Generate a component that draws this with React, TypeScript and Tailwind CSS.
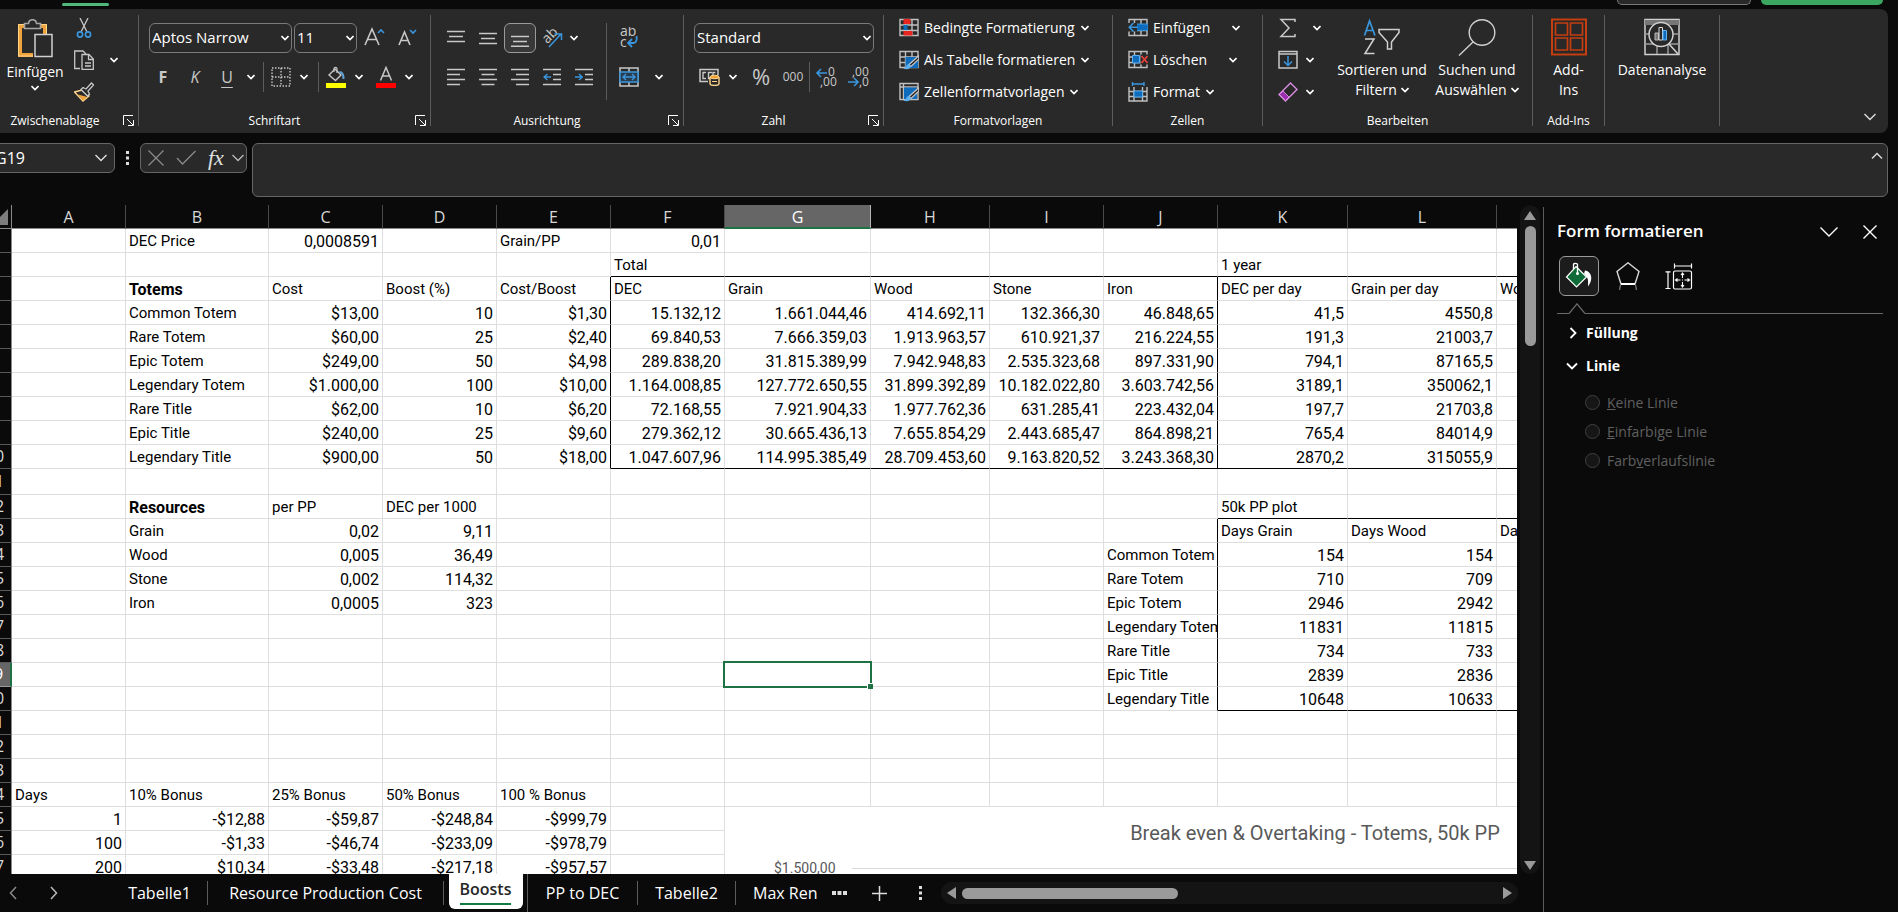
import { ReactNode } from 'react'

// ---------- sheet data ----------

const COLUMNS = [
  { id: 'A', width: 'w-[114px]' },
  { id: 'B', width: 'w-[143px]' },
  { id: 'C', width: 'w-[114px]' },
  { id: 'D', width: 'w-[114px]' },
  { id: 'E', width: 'w-[114px]' },
  { id: 'F', width: 'w-[114px]' },
  { id: 'G', width: 'w-[146px]' },
  { id: 'H', width: 'w-[119px]' },
  { id: 'I', width: 'w-[114px]' },
  { id: 'J', width: 'w-[114px]' },
  { id: 'K', width: 'w-[130px]' },
  { id: 'L', width: 'w-[149px]' },
  { id: 'M', width: 'w-[136px]' },
  { id: 'N', width: 'w-[136px]' },
  { id: 'O', width: 'w-[136px]' },
]

const ROWS: Record<number, string[]> = {
  1: ['', 'DEC Price', '0,0008591', '', 'Grain/PP', '0,01'],
  2: ['', '', '', '', '', 'Total', '', '', '', '', '1 year'],
  3: ['', 'Totems', 'Cost', 'Boost (%)', 'Cost/Boost', 'DEC', 'Grain', 'Wood', 'Stone', 'Iron', 'DEC per day', 'Grain per day', 'Wood per day'],
  4: ['', 'Common Totem', '$13,00', '10', '$1,30', '15.132,12', '1.661.044,46', '414.692,11', '132.366,30', '46.848,65', '41,5', '4550,8'],
  5: ['', 'Rare Totem', '$60,00', '25', '$2,40', '69.840,53', '7.666.359,03', '1.913.963,57', '610.921,37', '216.224,55', '191,3', '21003,7'],
  6: ['', 'Epic Totem', '$249,00', '50', '$4,98', '289.838,20', '31.815.389,99', '7.942.948,83', '2.535.323,68', '897.331,90', '794,1', '87165,5'],
  7: ['', 'Legendary Totem', '$1.000,00', '100', '$10,00', '1.164.008,85', '127.772.650,55', '31.899.392,89', '10.182.022,80', '3.603.742,56', '3189,1', '350062,1'],
  8: ['', 'Rare Title', '$62,00', '10', '$6,20', '72.168,55', '7.921.904,33', '1.977.762,36', '631.285,41', '223.432,04', '197,7', '21703,8'],
  9: ['', 'Epic Title', '$240,00', '25', '$9,60', '279.362,12', '30.665.436,13', '7.655.854,29', '2.443.685,47', '864.898,21', '765,4', '84014,9'],
  10: ['', 'Legendary Title', '$900,00', '50', '$18,00', '1.047.607,96', '114.995.385,49', '28.709.453,60', '9.163.820,52', '3.243.368,30', '2870,2', '315055,9'],
  12: ['', 'Resources', 'per PP', 'DEC per 1000', '', '', '', '', '', '', '50k PP plot'],
  13: ['', 'Grain', '0,02', '9,11', '', '', '', '', '', '', 'Days Grain', 'Days Wood', 'Days Stone'],
  14: ['', 'Wood', '0,005', '36,49', '', '', '', '', '', 'Common Totem', '154', '154'],
  15: ['', 'Stone', '0,002', '114,32', '', '', '', '', '', 'Rare Totem', '710', '709'],
  16: ['', 'Iron', '0,0005', '323', '', '', '', '', '', 'Epic Totem', '2946', '2942'],
  17: ['', '', '', '', '', '', '', '', '', 'Legendary Totem', '11831', '11815'],
  18: ['', '', '', '', '', '', '', '', '', 'Rare Title', '734', '733'],
  19: ['', '', '', '', '', '', '', '', '', 'Epic Title', '2839', '2836'],
  20: ['', '', '', '', '', '', '', '', '', 'Legendary Title', '10648', '10633'],
  24: ['Days', '10% Bonus', '25% Bonus', '50% Bonus', '100 % Bonus'],
  25: ['1', '-$12,88', '-$59,87', '-$248,84', '-$999,79'],
  26: ['100', '-$1,33', '-$46,74', '-$233,09', '-$978,79'],
  27: ['200', '$10,34', '-$33,48', '-$217,18', '-$957,57'],
}

const BOLD = ['Totems', 'Resources']
const SELECTED = { col: 'G', row: 19 }
const isNumber = (v: string) => /^-?\$?[\d.,]+$/.test(v)

function textStyle(value: string) {
  if (isNumber(value)) return 'pr-[3px] text-right text-base'
  if (BOLD.includes(value)) return 'pl-[3px] text-base font-bold'
  return 'pl-[3px] text-[15px]'
}

// black frame lines around the two result blocks
function rightBorder(c: number, r: number) {
  if (c === 4 && r >= 3 && r <= 10) return 'border-r-black'
  if (c === 9 && ((r >= 3 && r <= 10) || (r >= 13 && r <= 20))) return 'border-r-black'
  return 'border-r-[#dedede]'
}

function bottomBorder(c: number, r: number) {
  if ((r === 2 || r === 10) && c >= 5) return 'border-b-black'
  if ((r === 12 || r === 20) && c >= 10) return 'border-b-black'
  return 'border-b-[#dedede]'
}

// ---------- small icons ----------

function Svg({ w = 20, h = 20, children }: { w?: number; h?: number; children: ReactNode }) {
  return (
    <svg width={w} height={h} viewBox={`0 0 ${w} ${h}`} fill="none" className="shrink-0" aria-hidden="true">
      {children}
    </svg>
  )
}

const Chevron = () => (
  <Svg w={8} h={6}>
    <path d="M.5 1 4 4.500 7.500 1" stroke="#fff" strokeWidth="1.600" />
  </Svg>
)

const BigChevron = ({ up = false }: { up?: boolean }) => (
  <Svg w={14} h={8}>
    <path d={up ? 'M2 6.5 7 1.5 12 6.5' : 'M1.5 1 7 6.5 12.5 1'} stroke="#ddd" strokeWidth="1.4" />
  </Svg>
)

const Launcher = () => (
  <Svg w={11} h={11}>
    <path d="M.5 10V.5H10M4 4l6 6M10.5 5v5.5H5" stroke="#fff" />
  </Svg>
)

const PasteIcon = () => (
  <Svg w={36} h={40}>
    <path d="M8 7H3v29h13M23 7h5v8" stroke="#f0a23c" strokeWidth="4" />
    <path d="M8 5.500H1.500v31.500H16M23 5.500h6.500V15" stroke="#ffd68a" />
    <path d="M7.500 9.500V4.500h4c.5-5 7.500-5 8 0h4v5z" fill="#292929" stroke="#a5a5a5" strokeWidth="1.6" />
    <rect x="18" y="15.500" width="17" height="22" fill="#292929" stroke="#d0d0d0" strokeWidth="1.5" />
  </Svg>
)

const CutIcon = () => (
  <Svg>
    <path d="M6 0l7 14M14 0 7 14" stroke="#c8c8c8" strokeWidth="1.3" />
    <circle cx="6" cy="16.500" r="2.600" stroke="#3a96dd" strokeWidth="1.600" />
    <circle cx="14" cy="16.500" r="2.600" stroke="#3a96dd" strokeWidth="1.600" />
  </Svg>
)

const CopyIcon = () => (
  <Svg>
    <path d="M6 18.500H.700V1H9l3 3" stroke="#c8c8c8" strokeWidth="1.300" />
    <path d="M8 4.500h7l4.300 4.500v10.300H8z" fill="#292929" stroke="#c8c8c8" strokeWidth="1.300" />
    <path d="M14.500 5v4.500H19M11 13h6M11 16h6" stroke="#c8c8c8" strokeWidth="1.300" />
  </Svg>
)

const BrushIcon = () => (
  <Svg>
    <path d="M.5 10 8 8l7 6-6 5z" fill="#292929" stroke="#ffd68a" strokeWidth="1.300" />
    <path d="M4 12.500 13.500 15 9 18.500z" fill="#f0a23c" />
    <path d="M7 7.500 9 5.500 12 7l5.500-6 2 2-5.500 6 1.500 3-2 2z" fill="#292929" stroke="#c8c8c8" strokeWidth="1.300" />
  </Svg>
)

const GrowFont = ({ shrink = false }: { shrink?: boolean }) => (
  <Svg w={22} h={22}>
    <path d={shrink ? 'M3 18 8.500 5 14 18M5 13.500h7' : 'M1 18 8 2 15 18M3.500 12.500h9'} stroke="#c8c8c8" strokeWidth="1.600" />
    <path d={shrink ? 'M14 3 17 6 20 3' : 'M14 6 17 3 20 6'} stroke="#3a96dd" strokeWidth="1.600" />
  </Svg>
)

const BorderIcon = () => (
  <Svg>
    <path d="M1 1h18v18H1zM10 1v18M1 10h18" stroke="#c8c8c8" strokeWidth="1.400" strokeDasharray="1.500 1.500" />
  </Svg>
)

const FillIcon = () => (
  <Svg w={20} h={22}>
    <path d="M3 9 9 3l6 6-5.500 5.500z" stroke="#c8c8c8" strokeWidth="1.400" />
    <path d="M8 6V2.500C8 1 11 1 11 2.500V7" stroke="#c8c8c8" strokeWidth="1.200" />
    <path d="M13.500 6c3 0 4 3 4 7" stroke="#5fa3d8" strokeWidth="2" />
    <path d="M0 17h20v5H0z" fill="#ff0" />
  </Svg>
)

const FontColorIcon = () => (
  <Svg w={20} h={22}>
    <path d="M4.500 14.500 10 1.500l5.500 13M6.500 10h7" stroke="#c8c8c8" strokeWidth="1.500" />
    <path d="M0 17h20v5H0z" fill="#f00" />
  </Svg>
)

const Lines = ({ d }: { d: string }) => (
  <Svg w={18} h={18}>
    <path d={d} stroke="#c8c8c8" strokeWidth="1.600" />
  </Svg>
)

const OrientationIcon = () => (
  <Svg w={22} h={22}>
    <text x="2" y="15" transform="rotate(-45 7 11)" fontSize="14" fill="#c8c8c8" className="font-['Open_Sans',sans-serif]">ab</text>
    <path d="M8 20 20 7M13.500 7H20.500v6" stroke="#3a96dd" strokeWidth="1.500" />
  </Svg>
)

const IndentIcon = ({ right = false }: { right?: boolean }) => (
  <Svg w={18} h={18}>
    <path d="M0 1.500h18M10 6.500h8M10 11.500h8M0 16.500h18" stroke="#c8c8c8" strokeWidth="1.600" />
    <path d={right ? 'M0 9h7M4 6l3.200 3L4 12' : 'M8 9H1.500M4.500 6 1 9l3.500 3'} stroke="#3a96dd" strokeWidth="1.400" />
  </Svg>
)

const WrapIcon = () => (
  <Svg w={20} h={22}>
    <text x="1" y="9" fontSize="14" fill="#c8c8c8" className="font-['Open_Sans',sans-serif]">ab</text>
    <text x="1" y="20" fontSize="14" fill="#c8c8c8" className="font-['Open_Sans',sans-serif]">c</text>
    <path d="M17.500 9c1 5-1 7-3 7H9.500M13 12l-4 4 4 4" stroke="#3a96dd" strokeWidth="1.800" />
  </Svg>
)

const MergeIcon = () => (
  <Svg>
    <path d="M1 1h18v18H1zM10 1v4M10 15v4" stroke="#c8c8c8" strokeWidth="1.500" />
    <path d="M1 5h18v10H1z" fill="#2b3d4d" stroke="#3a96dd" strokeWidth="1.500" />
    <path d="M4 10h12M7 7l-3 3 3 3M13 7l3 3-3 3" stroke="#3a96dd" strokeWidth="1.400" />
  </Svg>
)

const CurrencyIcon = () => (
  <Svg w={21} h={18}>
    <path d="M9 13.500H1v-12h18v6" stroke="#c8c8c8" strokeWidth="1.500" />
    <path d="M7 4.500H4v6h3M13 4.500H9.500v6h1.500M16.500 4.500H14v3" stroke="#c8c8c8" strokeWidth="1.400" />
    <path d="M11 9v6.500c0 2.500 9 2.500 9 0V9" fill="#292929" stroke="#ffd68a" strokeWidth="1.400" />
    <ellipse cx="15.500" cy="9" rx="4.500" ry="1.800" fill="#f0a23c" stroke="#ffd68a" />
    <path d="M13 13.500h5" stroke="#ffd68a" />
  </Svg>
)

const DecimalIcon = ({ less = false }: { less?: boolean }) => (
  <Svg w={22} h={22}>
    <text x={less ? 5 : 13} y="10" fontSize="12" fill="#c8c8c8" className="font-['Open_Sans',sans-serif]">{less ? ',00' : '0'}</text>
    <text x={less ? 12 : 5} y="20" fontSize="12" fill="#c8c8c8" className="font-['Open_Sans',sans-serif]">{less ? ',0' : ',00'}</text>
    <path d={less ? 'M1 16h9M7 12l4 4-4 4' : 'M12 7H2M6 3 2 7l4 4'} stroke="#3a96dd" strokeWidth="1.600" />
  </Svg>
)

const Grid = () => <path d="M1 1.500h18v16H1zM6.500 1.500v16M13 1.500v16M1 7h18M1 12.500h18" stroke="#c0c0c0" strokeWidth="1.400" />

const ConditionalIcon = () => (
  <Svg>
    <Grid />
    <path d="M4.500 1h7v5h-7zM4.500 13h9v4.500h-9z" fill="#e8251f" />
    <path d="M4.500 7h4v5h-4z" fill="#0f6cbd" />
  </Svg>
)

const Brush = () => (
  <>
    <path d="M19.500 6 10 14.500l2 2L20 9z" fill="#292929" stroke="#c8c8c8" strokeWidth="1.200" />
    <path d="M10 14c-3 0-2 3.500-6 4.500 4 1.500 8 .5 8-2.500z" fill="#5eb0ef" />
  </>
)

const AsTableIcon = () => (
  <Svg>
    <Grid />
    <path d="M6.500 7H19v11H6.500z" fill="#0f6cbd" />
    <Brush />
  </Svg>
)

const CellStyleIcon = () => (
  <Svg>
    <path d="M1 1.500h18v16H1zM1 5h18M4.500 1.500v16" stroke="#c0c0c0" strokeWidth="1.400" />
    <path d="M5 5.500h13V17H5z" fill="#0f6cbd" />
    <Brush />
  </Svg>
)

const InsertIcon = () => (
  <Svg>
    <Grid />
    <path d="M8 6h12v6.500H8z" fill="#0f6cbd" stroke="#3a96dd" />
    <path d="M0 5h9v8.500H0z" fill="#292929" />
    <path d="M10 9.300H1.500M5.500 5 1.200 9.300l4.300 4.300" stroke="#3a96dd" strokeWidth="1.500" />
  </Svg>
)

const DeleteIcon = () => (
  <Svg>
    <Grid />
    <path d="M4.500 5.500h7V13h-7z" fill="#0f6cbd" stroke="#5eb0ef" />
    <path d="M12.500 4.500H20v10h-7.500z" fill="#292929" />
    <path d="M13.500 6l6 7M19.500 6l-6 7" stroke="#f0413c" strokeWidth="1.600" />
  </Svg>
)

const FormatIcon = () => (
  <Svg>
    <path d="M1 5v14h18V5M1 9.500h18M1 14.500h18M6 5v14M14.500 5v14" stroke="#c0c0c0" strokeWidth="1.400" />
    <path d="M6 9h8.500v6H6z" fill="#0f6cbd" stroke="#5eb0ef" />
    <path d="M4 2h12.500M4.500 0v4M16 0v4" stroke="#3a96dd" strokeWidth="1.400" />
  </Svg>
)

const SumIcon = () => (
  <Svg>
    <path d="M17 4V1.500H3L11 10 3 18.500h14V16" stroke="#c8c8c8" strokeWidth="1.500" />
  </Svg>
)

const FillDownIcon = () => (
  <Svg>
    <path d="M1 1.500h18V18H1zM1 4h18" stroke="#c8c8c8" strokeWidth="1.500" />
    <path d="M10 6v9M6 11.500l4 4 4-4" stroke="#3a96dd" strokeWidth="1.500" />
  </Svg>
)

const EraserIcon = () => (
  <Svg>
    <path d="M1 12.500 12.500 1 19 7.500 7.500 19z" stroke="#d88ce0" strokeWidth="1.400" />
    <path d="M1.500 12.500 5 9l6 6-3.500 3.500z" fill="#9b2fae" stroke="#d88ce0" />
  </Svg>
)

const SortIcon = () => (
  <Svg w={38} h={38}>
    <path d="M1.500 17.500 6.500 3l5.500 14.500M3.500 12.500h7" stroke="#3a96dd" strokeWidth="1.700" />
    <path d="M2 21h9L2 35.500h9.500" stroke="#d0d0d0" strokeWidth="1.500" />
    <path d="M16 11.500h20v3L28.500 24v7h-4v-7L16 14.500z" stroke="#d0d0d0" strokeWidth="1.500" />
  </Svg>
)

const SearchIcon = () => (
  <Svg w={38} h={38}>
    <circle cx="24" cy="14.500" r="12.800" stroke="#d0d0d0" strokeWidth="1.400" />
    <path d="M15 24 1 37.500" stroke="#d0d0d0" strokeWidth="1.400" />
  </Svg>
)

const AddInsIcon = () => (
  <Svg w={36} h={38}>
    <path d="M1 1.500h34v35H1z" stroke="#c43e10" strokeWidth="2" />
    <path d="M4.500 5h12v12h-12zM19.500 5h12v12h-12zM4.500 20h12v12h-12zM19.500 20h12v12h-12z" stroke="#c43e10" strokeWidth="1.700" />
  </Svg>
)

const AnalysisIcon = () => (
  <Svg w={36} h={38}>
    <path d="M1 1.500h34v35H1z" stroke="#d0d0d0" strokeWidth="1.500" />
    <path d="M1 2h34v5H1z" fill="#777" />
    <path d="M1 16h34M1 26h34M13 26v10M24 26v10" stroke="#9a9a9a" strokeWidth="1.500" />
    <circle cx="17" cy="16.500" r="12" fill="#292929" stroke="#d0d0d0" strokeWidth="1.500" />
    <path d="M25 26l9 10" stroke="#d0d0d0" strokeWidth="1.600" />
    <path d="M11 15h3.500v7H11z" fill="#777" stroke="#bbb" />
    <path d="M15 9.500h3.500V22H15z" fill="#292929" stroke="#ddd" />
    <path d="M19 12.500h3.500V22H19z" fill="#0f6cbd" stroke="#5eb0ef" />
  </Svg>
)

// ---------- ribbon ----------

function Group({ label, launcher, className, children }: { label?: string; launcher?: boolean; className: string; children: ReactNode }) {
  return (
    <section className={`relative flex h-[111px] shrink-0 flex-col border-r border-[#5c5c5c] ${className}`}>
      <div className="flex-1">{children}</div>
      <div className="flex h-[10px] items-center justify-center text-xs">{label}</div>
      {launcher && (
        <button aria-label={`${label} Optionen`} className="absolute right-1 bottom-0">
          <Launcher />
        </button>
      )}
    </section>
  )
}

function Btn({ label, className = 'w-8', children }: { label: string; className?: string; children: ReactNode }) {
  return (
    <button aria-label={label} className={`flex h-[30px] shrink-0 items-center justify-center ${className}`}>
      {children}
    </button>
  )
}

function Select({ label, value, className }: { label: string; value: string; className: string }) {
  return (
    <label className={`relative block h-[30px] shrink-0 ${className}`}>
      <select aria-label={label} className="h-full w-full appearance-none rounded-md border border-[#7a7a7a] bg-[#292929] pl-[2px] text-[15px] text-white">
        <option>{value}</option>
      </select>
      <span className="pointer-events-none absolute top-3 right-[3px]">
        <Chevron />
      </span>
    </label>
  )
}

const Divider = ({ className = 'h-[30px]' }: { className?: string }) => <span className={`w-px shrink-0 bg-[#5c5c5c] ${className}`} />

function MenuRow({ icon, label, gap = 'gap-[6px]' }: { icon: ReactNode; label: string; gap?: string }) {
  return (
    <button className="flex h-[26px] items-center gap-[5px] whitespace-nowrap">
      {icon}
      <span className={`flex items-center ${gap}`}>
        {label}
        <Chevron />
      </span>
    </button>
  )
}

function Ribbon() {
  return (
    <div className="mr-[10px] flex h-[124px] shrink-0 overflow-hidden rounded-r-lg bg-[#292929] pt-[6px] text-sm text-white">
      <Group label="Zwischenablage" launcher className="w-[139px] pr-7">
        <div className="flex pl-[7px]">
          <button className="-mr-1 flex w-14 shrink-0 flex-col items-center pt-1">
            <PasteIcon />
            <span className="leading-[26px]">Einfügen</span>
            <Chevron />
          </button>
          <div className="flex flex-col gap-[6px] pl-[9px]">
            <button aria-label="Ausschneiden" className="flex h-[26px] w-8 items-center justify-center"><CutIcon /></button>
            <button aria-label="Kopieren" className="flex h-[26px] w-[50px] items-center justify-between pl-[6px]"><CopyIcon /><Chevron /></button>
            <button aria-label="Format übertragen" className="flex h-[26px] w-8 items-center justify-center"><BrushIcon /></button>
          </div>
        </div>
      </Group>

      <Group label="Schriftart" launcher className="w-[292px] pr-5">
        <div className="flex flex-col gap-[9px] pt-2">
          <div className="flex pl-[10px]">
            <Select label="Schriftart" value="Aptos Narrow" className="w-[143px]" />
            <Select label="Schriftgrad" value="11" className="ml-[2px] w-[63px]" />
            <Btn label="Schriftgrad vergrößern" className="ml-[2px] w-8"><GrowFont /></Btn>
            <Btn label="Schriftgrad verkleinern"><GrowFont shrink /></Btn>
          </div>
          <div className="flex pl-2 text-base text-[#c8c8c8]">
            <Btn label="Fett"><b>F</b></Btn>
            <Btn label="Kursiv"><i>K</i></Btn>
            <Btn label="Unterstrichen"><u className="underline-offset-4">U</u></Btn>
            <Btn label="Unterstreichung wählen" className="w-4"><Chevron /></Btn>
            <Divider className="mx-1 h-[30px]" />
            <Btn label="Rahmen" className="w-[26px]"><BorderIcon /></Btn>
            <Btn label="Rahmen wählen" className="w-5"><Chevron /></Btn>
            <Divider className="mx-1 h-[30px]" />
            <Btn label="Füllfarbe" className="w-[26px]"><FillIcon /></Btn>
            <Btn label="Füllfarbe wählen" className="w-5"><Chevron /></Btn>
            <Btn label="Schriftfarbe" className="ml-1 w-[26px]"><FontColorIcon /></Btn>
            <Btn label="Schriftfarbe wählen" className="w-5"><Chevron /></Btn>
          </div>
        </div>
      </Group>

      <Group label="Ausrichtung" launcher className="w-[253px] pr-5">
        <div className="flex pl-[9px]">
          <div className="flex flex-col gap-[9px] pt-2">
            <div className="flex">
              <Btn label="Oben ausrichten"><Lines d="M0 2.500h18M2 7.500h14M0 12.500h18" /></Btn>
              <Btn label="Zentriert ausrichten"><Lines d="M0 4.500h18M2 9.500h14M0 14.500h18" /></Btn>
              <Btn label="Unten ausrichten" className="w-8 rounded-md border border-[#9a9a9a] bg-[#383838]"><Lines d="M0 7.500h18M2 12.500h14M0 17.200h18" /></Btn>
              <Btn label="Ausrichtung"><OrientationIcon /></Btn>
              <Btn label="Ausrichtung wählen" className="w-3"><Chevron /></Btn>
            </div>
            <div className="flex">
              <Btn label="Linksbündig"><Lines d="M0 1.500h18M0 6.500h13M0 11.500h18M0 16.500h13" /></Btn>
              <Btn label="Zentriert"><Lines d="M0 1.500h18M2.500 6.500h13M0 11.500h18M2.500 16.500h13" /></Btn>
              <Btn label="Rechtsbündig"><Lines d="M0 1.500h18M5 6.500h13M0 11.500h18M5 16.500h13" /></Btn>
              <Btn label="Einzug verkleinern"><IndentIcon /></Btn>
              <Btn label="Einzug vergrößern"><IndentIcon right /></Btn>
            </div>
          </div>
          <Divider className="mt-2 ml-[6px] h-[77px]" />
          <div className="flex flex-col gap-[9px] pt-2 pl-[6px]">
            <Btn label="Textumbruch"><WrapIcon /></Btn>
            <div className="flex">
              <Btn label="Verbinden"><MergeIcon /></Btn>
              <Btn label="Verbinden wählen" className="ml-[6px] w-4"><Chevron /></Btn>
            </div>
          </div>
        </div>
      </Group>

      <Group label="Zahl" launcher className="w-[200px] pr-5">
        <div className="flex flex-col gap-[9px] pt-2">
          <Select label="Zahlenformat" value="Standard" className="ml-[10px] w-[180px]" />
          <div className="flex pl-[9px] text-[#c8c8c8]">
            <Btn label="Buchhaltungszahlenformat"><CurrencyIcon /></Btn>
            <Btn label="Währung wählen" className="w-4"><Chevron /></Btn>
            <Btn label="Prozent" className="ml-1 w-8 text-[22px]">%</Btn>
            <Btn label="Tausender" className="w-8 text-xs">000</Btn>
            <Divider />
            <Btn label="Dezimalstelle hinzufügen"><DecimalIcon /></Btn>
            <Btn label="Dezimalstelle löschen"><DecimalIcon less /></Btn>
          </div>
        </div>
      </Group>

      <Group label="Formatvorlagen" className="w-[229px]">
        <div className="flex flex-col gap-[6px] pl-[15px]">
          <MenuRow icon={<ConditionalIcon />} label="Bedingte Formatierung" />
          <MenuRow icon={<AsTableIcon />} label="Als Tabelle formatieren" />
          <MenuRow icon={<CellStyleIcon />} label="Zellenformatvorlagen" />
        </div>
      </Group>

      <Group label="Zellen" className="w-[150px]">
        <div className="flex flex-col gap-[6px] pl-[15px]">
          <MenuRow icon={<InsertIcon />} label="Einfügen" gap="gap-[22px]" />
          <MenuRow icon={<DeleteIcon />} label="Löschen" gap="gap-[22px]" />
          <MenuRow icon={<FormatIcon />} label="Format" />
        </div>
      </Group>

      <Group label="Bearbeiten" className="w-[270px]">
        <div className="flex pl-[15px]">
          <div className="flex w-[54px] flex-col gap-[6px]">
            <button aria-label="Summe" className="flex h-[26px] items-center gap-[15px]"><SumIcon /><Chevron /></button>
            <button aria-label="Ausfüllen" className="flex h-[26px] items-center gap-2"><FillDownIcon /><Chevron /></button>
            <button aria-label="Löschen" className="flex h-[26px] items-center gap-2"><EraserIcon /><Chevron /></button>
          </div>
          <button className="flex w-[100px] flex-col items-center pt-[3px] leading-5">
            <SortIcon />
            <span className="mt-1 whitespace-nowrap">Sortieren und</span>
            <span className="flex items-center gap-1">Filtern <Chevron /></span>
          </button>
          <button className="flex w-[90px] flex-col items-center pt-[3px] leading-5">
            <SearchIcon />
            <span className="mt-1 whitespace-nowrap">Suchen und</span>
            <span className="flex items-center gap-1">Auswählen <Chevron /></span>
          </button>
        </div>
      </Group>

      <Group label="Add-Ins" className="w-[72px]">
        <button className="flex w-full flex-col items-center pt-[3px] leading-5">
          <AddInsIcon />
          <span className="mt-1">Add-</span>
          <span>Ins</span>
        </button>
      </Group>

      <Group className="w-[115px]">
        <button className="flex w-full flex-col items-center pt-[3px] leading-5">
          <AnalysisIcon />
          <span className="mt-1">Datenanalyse</span>
        </button>
      </Group>

      <button aria-label="Menüband reduzieren" className="mt-auto mr-[11px] mb-3 ml-auto">
        <BigChevron />
      </button>
    </div>
  )
}

// ---------- formula bar ----------

function FormulaBar() {
  return (
    <div className="mr-[10px] flex h-[72px] shrink-0 items-start pt-[10px]">
      <div className="relative -ml-3 w-[127px]">
        <input aria-label="Namenfeld" defaultValue="G19" className="h-[30px] w-full rounded-md border border-[#666] bg-[#292929] pl-[6px] text-base text-white" />
        <span className="pointer-events-none absolute top-[11px] right-[7px]"><BigChevron /></span>
      </div>
      <div className="flex h-[30px] w-[25px] items-center justify-center">
        <Svg w={3} h={14}><path d="M0 0h3v3H0zM0 5.500h3v3H0zM0 11h3v3H0z" fill="#ddd" /></Svg>
      </div>
      <div className="flex h-[30px] w-[107px] items-center rounded-md border border-[#666] bg-[#292929]">
        <button aria-label="Abbrechen" className="w-[30px] pl-[7px]"><Svg w={16} h={16}><path d="M.5.500l15 15M15.500.500l-15 15" stroke="#8a8a8a" strokeWidth="1.300" /></Svg></button>
        <button aria-label="Eingeben" className="w-[31px] pl-[5px]"><Svg w={20} h={16}><path d="M1 8l5.500 6L19.500 1" stroke="#8a8a8a" strokeWidth="1.300" /></Svg></button>
        <button aria-label="Funktion einfügen" className="w-[29px] pl-[6px] text-left font-['Liberation_Serif',serif] text-[22px] leading-none italic text-[#e0e0e0]">fx</button>
        <button aria-label="Funktionen"><Svg w={14} h={8}><path d="M1.500 1 7 6.500 12.500 1" stroke="#bbb" strokeWidth="1.300" /></Svg></button>
      </div>
      <div className="relative ml-[5px] flex-1">
        <input aria-label="Bearbeitungsleiste" className="block h-[54px] w-full rounded-md border border-[#666] bg-[#292929] px-2 text-white" />
        <button aria-label="Bearbeitungsleiste reduzieren" className="absolute top-[9px] right-1 flex"><BigChevron up /></button>
      </div>
    </div>
  )
}

// ---------- sheet ----------

function Chart() {
  return (
    <div className="flex h-[71px] flex-col bg-white text-[#595959]">
      <h2 className="pt-[11px] text-center text-xl leading-[30px]">Break even &amp; Overtaking - Totems, 50k PP</h2>
      <div className="flex items-center gap-4 pt-[10px] pl-[49px] text-sm leading-5">
        $1.500,00
        <span className="h-px flex-1 bg-[#d9d9d9]" />
      </div>
    </div>
  )
}

function Sheet() {
  return (
    <div className="min-w-0 flex-1 overflow-hidden bg-white">
      <table className="w-[1868px] table-fixed border-separate border-spacing-0 font-['Roboto',sans-serif] text-base leading-[21px] text-black">
        <thead className="bg-[#0a0a0a] font-['Open_Sans',sans-serif] text-[#d8d8d8]">
          <tr className="h-6">
            <th className="w-3 border-r border-b border-[#8a8a8a] p-0">
              <Svg w={8} h={16}><path d="M8 0v16H0V8z" fill="#7d7d7d" /></Svg>
            </th>
            {COLUMNS.map(({ id, width }) => (
              <th
                key={id}
                className={`border-r px-0 pt-[2px] pb-0 font-normal ${width} ${id === SELECTED.col ? 'border-r-[#b5b5b5] border-b-2 border-b-[#1f7244] bg-[#666] leading-5 text-white' : 'border-r-[#4a4a4a] border-b border-b-[#8a8a8a]'}`}
              >
                {id}
              </th>
            ))}
          </tr>
        </thead>
        <tbody>
          {Array.from({ length: 27 }, (_, i) => i + 1).map(r => (
            <tr key={r} className={r === 11 ? 'h-[26px]' : 'h-6'}>
              <th
                className={`border-b p-0 font-['Open_Sans',sans-serif] font-normal ${r === SELECTED.row ? 'border-r-2 border-r-[#1f7244] border-b-[#9a9a9a] bg-[#666] text-white' : 'border-r border-r-[#8a8a8a] border-b-[#5a5a5a] bg-[#0a0a0a] text-[#d8d8d8]'}`}
              >
                <div className="flex h-[23px] justify-end overflow-hidden pt-px">
                  <span className="w-8 shrink-0 text-center">{r}</span>
                </div>
              </th>
              {COLUMNS.map(({ id }, c) => {
                // the chart covers G25 and everything right of and below it
                if (r >= 25 && c >= 6) {
                  return r === 25 && c === 6 ? (
                    <td key={id} rowSpan={3} colSpan={9} className="p-0 align-top"><Chart /></td>
                  ) : null
                }
                const value = ROWS[r]?.[c] ?? ''
                const selected = id === SELECTED.col && r === SELECTED.row
                return (
                  <td
                    key={id}
                    className={`border-r border-b p-0 ${rightBorder(c, r)} ${bottomBorder(c, r)} ${selected ? 'relative' : ''}`}
                  >
                    <div className={`h-[23px] overflow-hidden pt-[2px] leading-[21px] whitespace-nowrap ${textStyle(value)}`}>{value}</div>
                    {selected && (
                      <div className="absolute -inset-[2px] border-2 border-[#1f7244]">
                        <span className="absolute -right-[3px] -bottom-[3px] h-[6px] w-[6px] border-t border-l border-white bg-[#1f7244]" />
                      </div>
                    )}
                  </td>
                )
              })}
            </tr>
          ))}
        </tbody>
      </table>
    </div>
  )
}

function VerticalScrollbar() {
  return (
    <div className="flex w-[26px] shrink-0 justify-center">
      <div className="flex w-5 flex-col items-center rounded-full bg-[#141414] pt-[6px]">
        <Svg w={12} h={9}><path d="M6 0l6 9H0z" fill="#9a9a9a" /></Svg>
        <div className="mt-[6px] h-[120px] w-[11px] rounded-full bg-[#9a9a9a]" />
        <div className="mt-auto mb-1">
          <Svg w={12} h={9}><path d="M6 9 0 0h12z" fill="#9a9a9a" /></Svg>
        </div>
      </div>
    </div>
  )
}

const SHEETS = [
  { name: 'Tabelle1', width: 'w-[96px]' },
  { name: 'Resource Production Cost', width: 'w-[236px]' },
  { name: 'Boosts', width: 'w-[84px]' },
  { name: 'PP to DEC', width: 'w-[110px]' },
  { name: 'Tabelle2', width: 'w-[98px]' },
]

function SheetTabs() {
  return (
    <div className="flex h-[38px] shrink-0 items-center pr-[25px] text-base text-white">
      <div className="flex w-[112px] gap-[33px] pl-[9px]">
        <button aria-label="Vorheriges Blatt"><Svg w={8} h={14}><path d="M7 1 1.500 7 7 13" stroke="#8a8a8a" strokeWidth="1.500" /></Svg></button>
        <button aria-label="Nächstes Blatt"><Svg w={8} h={14}><path d="M1 1l5.500 6L1 13" stroke="#bbb" strokeWidth="1.500" /></Svg></button>
      </div>
      {SHEETS.map(({ name, width }) =>
        name === 'Boosts' ? (
          <div key={name} className={`flex h-full justify-center border-r border-[#5c5c5c] pb-1 ${width}`}>
            <button className="h-[35px] w-[74px] rounded-b-md bg-white pb-[3px] text-center font-semibold text-[#262626]">
              <span className="inline-block border-b-2 border-[#107c41] leading-7">{name}</span>
            </button>
          </div>
        ) : (
          <button key={name} className={`h-6 border-r border-[#5c5c5c] whitespace-nowrap ${width}`}>{name}</button>
        ),
      )}
      <button className="ml-[17px] w-[67px] overflow-hidden text-left whitespace-nowrap">Max Ren</button>
      <button aria-label="Weitere Blätter" className="ml-3"><Svg w={15} h={4}><path d="M0 0h4v4H0zM5.500 0h4v4h-4zM11 0h4v4h-4z" fill="#ddd" /></Svg></button>
      <button aria-label="Neues Blatt" className="ml-[25px]"><Svg w={15} h={15}><path d="M7.500 0v15M0 7.500h15" stroke="#ddd" strokeWidth="1.500" /></Svg></button>
      <span className="ml-8"><Svg w={3} h={14}><path d="M0 0h3v3H0zM0 5.500h3v3H0zM0 11h3v3H0z" fill="#ddd" /></Svg></span>
      <div className="ml-[19px] flex h-[22px] flex-1 items-center rounded-full bg-[#141414] px-[6px]">
        <Svg w={9} h={12}><path d="M0 6l9-6v12z" fill="#9a9a9a" /></Svg>
        <div className="ml-[6px] h-[11px] w-[216px] rounded-full bg-[#9a9a9a]" />
        <div className="ml-auto">
          <Svg w={9} h={12}><path d="M9 6 0 0v12z" fill="#9a9a9a" /></Svg>
        </div>
      </div>
    </div>
  )
}

// ---------- format pane ----------

function RadioRow({ id, children }: { id: string; children: ReactNode }) {
  return (
    <div className="flex h-[29px] items-center gap-[7px]">
      <input id={id} type="radio" name="line" disabled className="h-[15px] w-[15px] appearance-none rounded-full border border-[#404040] bg-[#161616]" />
      <label htmlFor={id}>{children}</label>
    </div>
  )
}

function FormatPane() {
  return (
    <aside className="mt-[2px] w-[355px] shrink-0 border-l border-[#5c5c5c] pr-[15px] pl-[13px] text-sm text-white">
      <div className="flex h-[49px] items-center">
        <h1 className="flex-1 text-[17px] font-semibold">Form formatieren</h1>
        <button aria-label="Optionen" className="mr-[25px]"><Svg w={18} h={10}><path d="M.5.500 9 9 17.500.500" stroke="#fff" strokeWidth="1.400" /></Svg></button>
        <button aria-label="Schließen" className="mr-[6px]"><Svg w={14} h={14}><path d="M.5.500l13 13M13.500.500l-13 13" stroke="#fff" strokeWidth="1.400" /></Svg></button>
      </div>
      <div className="flex items-center pl-[2px]">
        <button aria-label="Füllung und Linie" className="flex h-10 w-10 items-center justify-center rounded-md border border-[#9a9a9a] bg-[#1c1c1c]">
          <Svg w={28} h={28}>
            <path d="M11 4.500 21.500 15 11.500 25 1.500 15z" fill="#0f6b38" stroke="#fff" strokeWidth="1.200" />
            <path d="M8.500 7V2.500C8.500 1 12.500 1 12.500 2.500V11" stroke="#fff" strokeWidth="1.300" />
            <circle cx="12.500" cy="11.500" r="1.500" fill="#fff" />
            <path d="M20 8.500c6 1 9 8 3 16 0-6 1-8-4-13z" fill="#fff" />
          </Svg>
        </button>
        <button aria-label="Effekte" className="ml-[17px]">
          <Svg w={24} h={28}>
            <path d="M12 .8 23 9.500 19 22H5L1 9.500z" stroke="#d8d8d8" strokeWidth="1.400" />
            <path d="M5 22h14" stroke="#fff" strokeWidth="2" />
            <path d="M4.500 23 3.500 28M19.500 23l1 5" stroke="#777" strokeWidth="1.300" />
          </Svg>
        </button>
        <button aria-label="Größe und Eigenschaften" className="ml-[25px]">
          <Svg w={28} h={28}>
            <rect x="8.500" y="9" width="18" height="18" rx="1.500" stroke="#fff" strokeWidth="1.200" />
            <path d="M9.500 4h17M9.500 1.500v5M26.500 1.500v5M3 10v16M.5 9.800h5M.5 26.500h5" stroke="#fff" strokeWidth="1.200" />
            <path d="M17.500 11v5M17.500 20v5M10.500 18h5M19.500 18h5M16 13l1.500-2 1.500 2M16 23l1.500 2 1.500-2M12.500 16.500l-2 1.500 2 1.500M22.500 16.500l2 1.500-2 1.500M17 18h1" stroke="#fff" strokeWidth="1.100" />
          </Svg>
        </button>
      </div>
      <div className="mt-[7px] flex items-end">
        <span className="h-px w-3 bg-[#6a6a6a]" />
        <Svg w={16} h={11}><path d="M0 10.500 8 .8l8 9.700" stroke="#6a6a6a" strokeWidth="1.200" /></Svg>
        <span className="h-px flex-1 bg-[#6a6a6a]" />
      </div>
      <button className="mt-[2px] flex h-[33px] items-center gap-[9px] pl-3 font-bold">
        <Svg w={8} h={12}><path d="M1.500 1l5 5-5 5" stroke="#fff" strokeWidth="1.800" /></Svg>
        Füllung
      </button>
      <button className="flex h-[33px] items-center gap-2 pl-[9px] font-bold">
        <Svg w={12} h={8}><path d="M1 1.500l5 5 5-5" stroke="#fff" strokeWidth="1.800" /></Svg>
        Linie
      </button>
      <div className="mt-[6px] pl-7 text-[#606060]">
        <RadioRow id="line-none"><u>K</u>eine Linie</RadioRow>
        <RadioRow id="line-solid"><u>E</u>infarbige Linie</RadioRow>
        <RadioRow id="line-gradient">Farb<u>v</u>erlaufslinie</RadioRow>
      </div>
    </aside>
  )
}

export default function App() {
  return (
    <div className="flex h-screen flex-col overflow-hidden bg-[#0a0a0a] font-['Open_Sans',sans-serif]">
      <div className="flex h-[9px] shrink-0 items-start pr-[15px] pl-[62px]">
        <span className="mt-[3px] h-[3px] w-[47px] rounded-full bg-[#4fb87a]" />
        <span className="ml-auto h-[5px] w-[134px] rounded-b-md border border-t-0 border-[#7a7a7a] bg-[#292929]" />
        <span className="ml-[10px] h-[5px] w-[122px] rounded-b-md bg-[#3aa660]" />
      </div>
      <Ribbon />
      <FormulaBar />
      <div className="flex min-h-0 flex-1">
        <div className="flex min-w-0 flex-1 flex-col">
          <div className="flex min-h-0 flex-1">
            <Sheet />
            <VerticalScrollbar />
          </div>
          <SheetTabs />
        </div>
        <FormatPane />
      </div>
    </div>
  )
}
